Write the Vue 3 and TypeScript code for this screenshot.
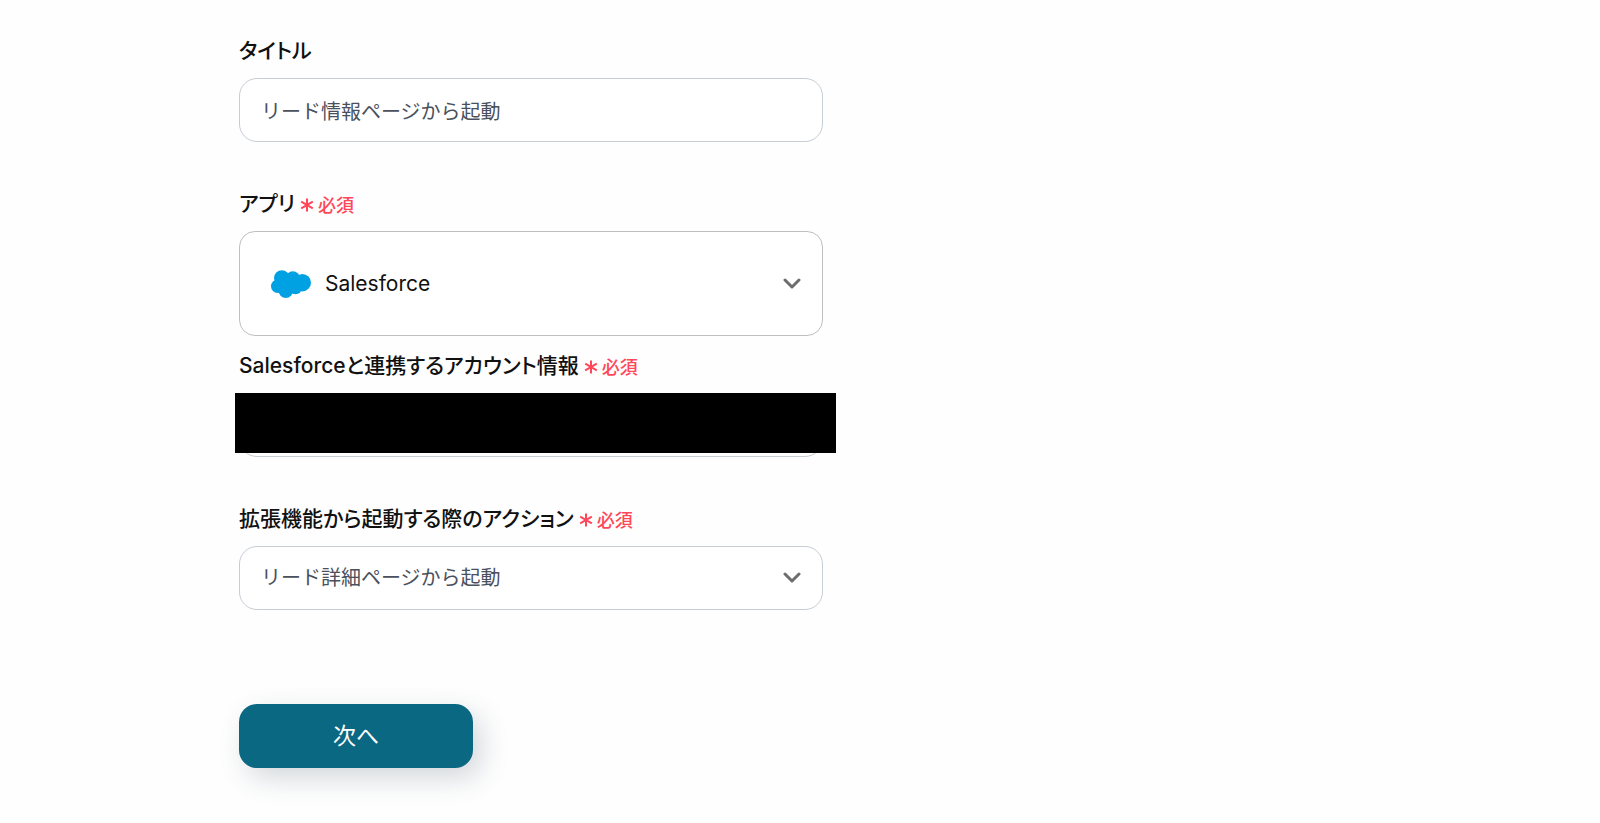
<script setup lang="ts">
import { ref } from 'vue'

const title = ref('リード情報ページから起動')
const app = ref('Salesforce')
const account = ref('')
const action = ref('リード詳細ページから起動')
</script>

<template>
  <main class="page">
    <form class="form" @submit.prevent>
      <div class="field">
        <div class="label-row"><label for="title">タイトル</label></div>
        <input id="title" v-model="title" class="control" type="text" />
      </div>

      <div class="field field-app">
        <div class="label-row">
          <label for="app">アプリ</label>
          <span class="required">
            <svg viewBox="0 0 14 14" aria-hidden="true"><path d="M7 .5v13M1.2 3.7l11.6 6.6M12.8 3.7L1.2 10.3" /></svg>必須
          </span>
        </div>
        <div class="select-box">
          <select id="app" v-model="app" class="control control-app">
            <option>Salesforce</option>
          </select>
          <svg class="cloud" viewBox="0 0 40 28" aria-hidden="true">
            <circle cx="10.8" cy="8" r="7.8" />
            <circle cx="21.8" cy="8.200" r="7" />
            <circle cx="31.3" cy="12.700" r="8.700" />
            <circle cx="6.700" cy="16.300" r="6.700" />
            <circle cx="14.800" cy="20.500" r="7.400" />
            <circle cx="24.500" cy="17.500" r="6.700" />
            <path d="M6 8h20l6 8-10 7H8z" />
          </svg>
          <svg class="chevron" viewBox="0 0 18 12" aria-hidden="true"><path d="M2 2l7 7 7-7" /></svg>
        </div>
      </div>

      <div class="field">
        <div class="label-row">
          <label for="account">Salesforceと連携するアカウント情報</label>
          <span class="required">
            <svg viewBox="0 0 14 14" aria-hidden="true"><path d="M7 .5v13M1.2 3.7l11.6 6.6M12.8 3.7L1.2 10.3" /></svg>必須
          </span>
        </div>
        <div class="masked">
          <input id="account" v-model="account" class="control" type="text" />
          <div class="mask"></div>
        </div>
      </div>

      <div class="field">
        <div class="label-row">
          <label for="action">拡張機能から起動する際のアクション</label>
          <span class="required">
            <svg viewBox="0 0 14 14" aria-hidden="true"><path d="M7 .5v13M1.2 3.7l11.6 6.6M12.8 3.7L1.2 10.3" /></svg>必須
          </span>
        </div>
        <div class="select-box">
          <select id="action" v-model="action" class="control">
            <option>リード詳細ページから起動</option>
          </select>
          <svg class="chevron" viewBox="0 0 18 12" aria-hidden="true"><path d="M2 2l7 7 7-7" /></svg>
        </div>
      </div>

      <button class="next" type="submit">次へ</button>
    </form>
  </main>
</template>

<style>
body {
  margin: 0;
  background: #fefefe;
}
</style>

<style scoped>
.page {
  box-sizing: border-box;
  padding: 36px 24px 54px 239px;
  font-family: Inter, "Noto Sans CJK JP", sans-serif;
  font-size: 20px;
  color: #111;
}
.form {
  max-width: 584px;
}
.field {
  margin-bottom: 47px;
}
.field-app {
  margin-bottom: 15px;
}
.label-row {
  display: flex;
  align-items: center;
  gap: 5px;
  height: 26px;
  margin-bottom: 16px;
  font-size: 21px;
  font-weight: 500;
  font-feature-settings: "palt";
  white-space: nowrap;
}
.required {
  display: flex;
  align-items: center;
  gap: 4px;
  margin-top: 4px;
  color: #ff4759;
  font-size: 18px;
}
.required svg {
  width: 14px;
  height: 14px;
  margin-top: 2px;
  fill: none;
  stroke: currentColor;
  stroke-width: 2;
}
.control {
  display: block;
  box-sizing: border-box;
  width: 100%;
  height: 64px;
  margin: 0;
  padding: 0 21px;
  border: 1px solid #c6cdd5;
  border-radius: 18px;
  background: #fff;
  color: #4a515c;
  font: inherit;
  appearance: none;
  outline: none;
}
.control-app {
  height: 105px;
  padding-left: 85px;
  border-color: #bfbfbf;
  border-radius: 16px;
  color: #111;
  font-size: 21px;
}
.select-box {
  display: grid;
  align-items: center;
}
.select-box > * {
  grid-area: 1 / 1;
}
.cloud,
.chevron {
  pointer-events: none;
}
.cloud {
  width: 40px;
  height: 28px;
  margin-left: 32px;
  fill: #00a1e3;
}
.chevron {
  width: 18px;
  height: 12px;
  justify-self: end;
  margin-right: 22px;
  fill: none;
  stroke: #6d6d6d;
  stroke-width: 3;
  stroke-linecap: round;
  stroke-linejoin: round;
}
.masked {
  position: relative;
}
.mask {
  position: absolute;
  inset: 0 -13px 4px -4px;
  background: #000;
}
.next {
  display: block;
  width: 234px;
  height: 64px;
  margin-top: 94px;
  padding: 0 0 4px;
  border: 0;
  border-radius: 18px;
  background: #0b6882;
  box-shadow: 8px 10px 28px rgb(40 60 80 / 20%);
  color: #fff;
  font: inherit;
  font-size: 23px;
}
</style>
